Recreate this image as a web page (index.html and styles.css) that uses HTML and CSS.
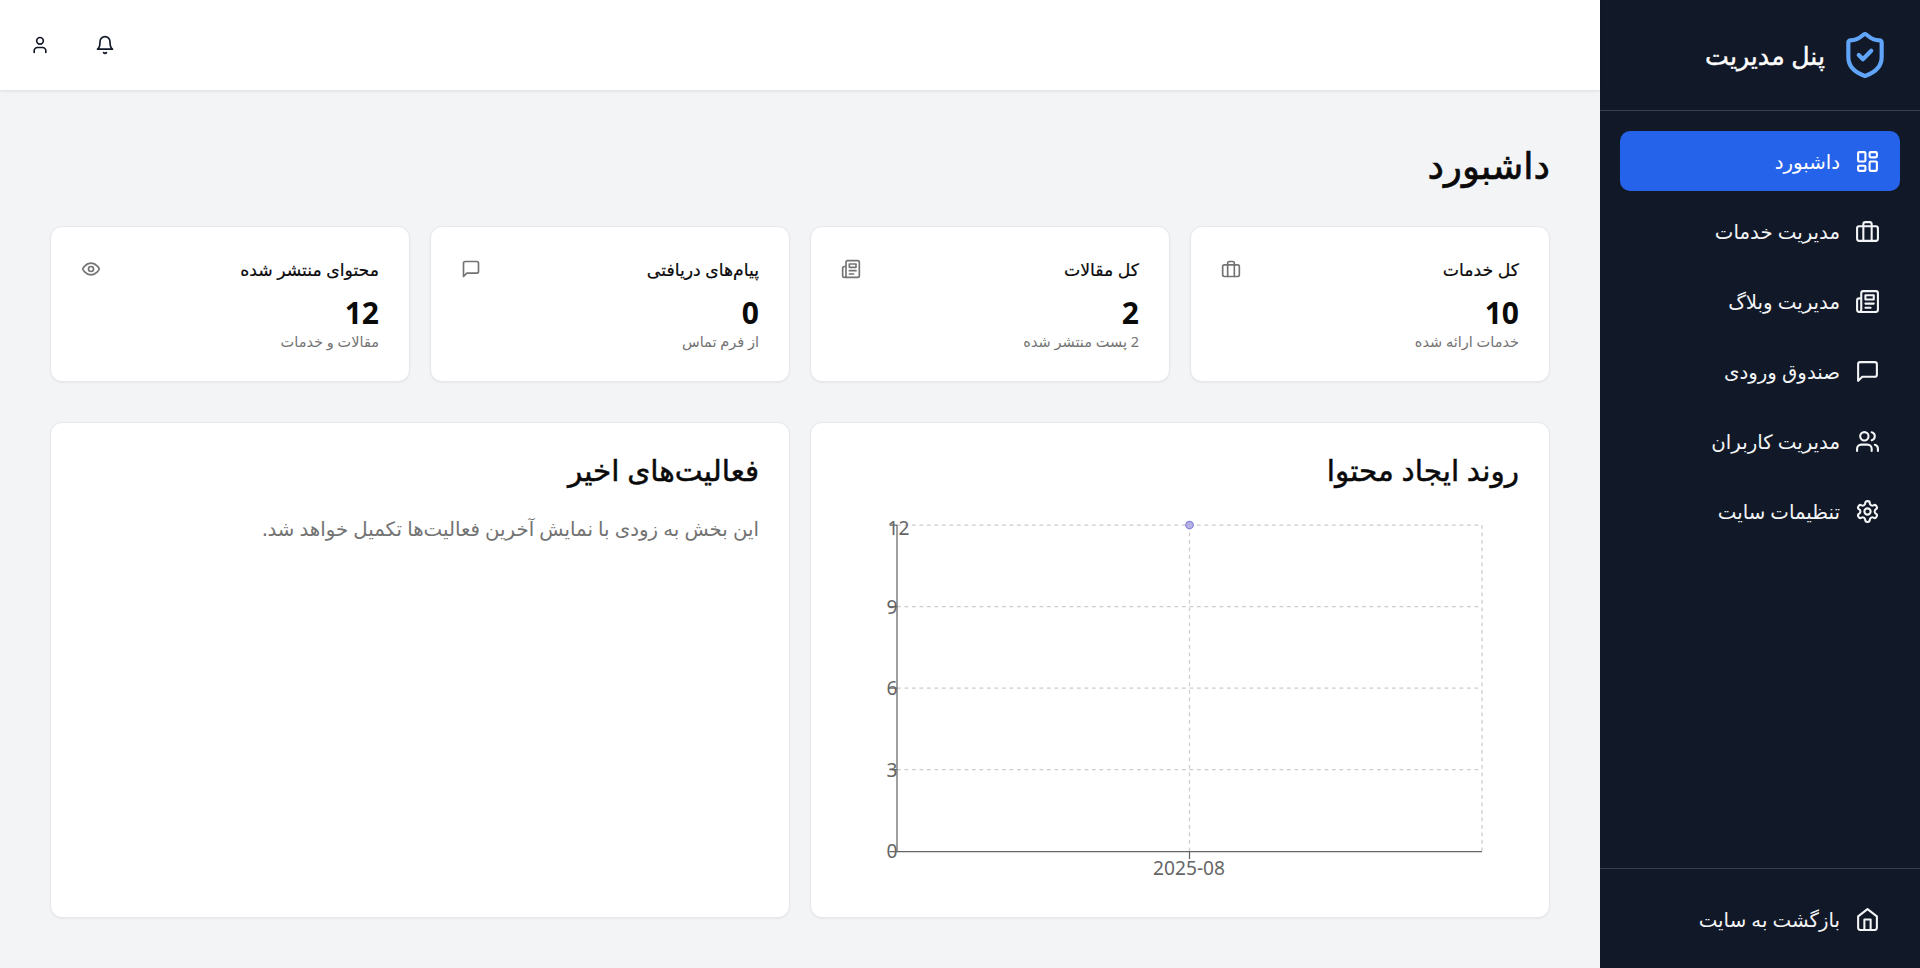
FILE: index.html
```html
<!DOCTYPE html>
<html lang="fa" dir="rtl">
<head>
<meta charset="utf-8">
<title>داشبورد</title>
<link rel="stylesheet" href="styles.css">
</head>
<body>
<div class="app">
  <aside class="sidebar">
    <div class="brand">
      <svg class="brand-icon" viewBox="0 0 24 24"><path d="M20 13c0 5-3.5 7.5-7.66 8.95a1 1 0 0 1-.67-.01C7.5 20.5 4 18 4 13V6a1 1 0 0 1 1-1c2 0 4.5-1.2 6.24-2.72a1.17 1.17 0 0 1 1.52 0C14.51 3.81 17 5 19 5a1 1 0 0 1 1 1z"/><path d="m9 12 2 2 4-4"/></svg>
      <span class="brand-name">پنل مدیریت</span>
    </div>
    <nav class="nav">
      <a class="nav-item active"><svg class="nav-icon" viewBox="0 0 24 24"><rect x="3" y="3" width="7" height="9" rx="1"/><rect x="14" y="3" width="7" height="5" rx="1"/><rect x="14" y="12" width="7" height="9" rx="1"/><rect x="3" y="16" width="7" height="5" rx="1"/></svg><span>داشبورد</span></a>
      <a class="nav-item"><svg class="nav-icon" viewBox="0 0 24 24"><rect x="2" y="7" width="20" height="14" rx="2"/><path d="M16 21V5a2 2 0 0 0-2-2h-4a2 2 0 0 0-2 2v16"/></svg><span>مدیریت خدمات</span></a>
      <a class="nav-item"><svg class="nav-icon" viewBox="0 0 24 24"><path d="M4 22h16a2 2 0 0 0 2-2V4a2 2 0 0 0-2-2H8a2 2 0 0 0-2 2v16a2 2 0 0 1-2 2Zm0 0a2 2 0 0 1-2-2v-9c0-1.1.9-2 2-2h2"/><path d="M18 14h-8M15 18h-5M10 6h8v4h-8V6Z"/></svg><span>مدیریت وبلاگ</span></a>
      <a class="nav-item"><svg class="nav-icon" viewBox="0 0 24 24"><path d="M21 15a2 2 0 0 1-2 2H7l-4 4V5a2 2 0 0 1 2-2h14a2 2 0 0 1 2 2z"/></svg><span>صندوق ورودی</span></a>
      <a class="nav-item"><svg class="nav-icon" viewBox="0 0 24 24"><path d="M16 21v-2a4 4 0 0 0-4-4H6a4 4 0 0 0-4 4v2"/><circle cx="9" cy="7" r="4"/><path d="M22 21v-2a4 4 0 0 0-3-3.87M16 3.13a4 4 0 0 1 0 7.75"/></svg><span>مدیریت کاربران</span></a>
      <a class="nav-item"><svg class="nav-icon" viewBox="0 0 24 24"><path d="M12.22 2h-.44a2 2 0 0 0-2 2v.18a2 2 0 0 1-1 1.73l-.43.25a2 2 0 0 1-2 0l-.15-.08a2 2 0 0 0-2.73.73l-.22.38a2 2 0 0 0 .73 2.73l.15.1a2 2 0 0 1 1 1.72v.51a2 2 0 0 1-1 1.74l-.15.09a2 2 0 0 0-.73 2.73l.22.38a2 2 0 0 0 2.73.73l.15-.08a2 2 0 0 1 2 0l.43.25a2 2 0 0 1 1 1.73V20a2 2 0 0 0 2 2h.44a2 2 0 0 0 2-2v-.18a2 2 0 0 1 1-1.73l.43-.25a2 2 0 0 1 2 0l.15.08a2 2 0 0 0 2.73-.73l.22-.39a2 2 0 0 0-.73-2.73l-.15-.08a2 2 0 0 1-1-1.74v-.5a2 2 0 0 1 1-1.74l.15-.09a2 2 0 0 0 .73-2.73l-.22-.38a2 2 0 0 0-2.73-.73l-.15.08a2 2 0 0 1-2 0l-.43-.25a2 2 0 0 1-1-1.73V4a2 2 0 0 0-2-2z"/><circle cx="12" cy="12" r="3"/></svg><span>تنظیمات سایت</span></a>
    </nav>
    <div class="sidebar-foot">
      <a class="nav-item"><svg class="nav-icon" viewBox="0 0 24 24"><path d="m3 9 9-7 9 7v11a2 2 0 0 1-2 2H5a2 2 0 0 1-2-2z"/><path d="M9 22V12h6v10"/></svg><span>بازگشت به سایت</span></a>
    </div>
  </aside>
  <div class="page">
    <header class="topbar">
      <svg class="top-icon" viewBox="0 0 24 24"><path d="M6 8a6 6 0 0 1 12 0c0 7 3 9 3 9H3s3-2 3-9"/><path d="M10.3 21a1.94 1.94 0 0 0 3.4 0"/></svg>
      <svg class="top-icon" viewBox="0 0 24 24"><path d="M19 21v-2a4 4 0 0 0-4-4H9a4 4 0 0 0-4 4v2"/><circle cx="12" cy="7" r="4"/></svg>
    </header>
    <main class="main">
      <h1 class="page-title">داشبورد</h1>
      <section class="stats">
        <article class="card stat">
          <div class="stat-head"><h3 class="stat-title">کل خدمات</h3><svg class="stat-icon" viewBox="0 0 24 24"><rect x="2" y="7" width="20" height="14" rx="2"/><path d="M16 21V5a2 2 0 0 0-2-2h-4a2 2 0 0 0-2 2v16"/></svg></div>
          <div class="stat-value">10</div>
          <p class="stat-sub">خدمات ارائه شده</p>
        </article>
        <article class="card stat">
          <div class="stat-head"><h3 class="stat-title">کل مقالات</h3><svg class="stat-icon" viewBox="0 0 24 24"><path d="M4 22h16a2 2 0 0 0 2-2V4a2 2 0 0 0-2-2H8a2 2 0 0 0-2 2v16a2 2 0 0 1-2 2Zm0 0a2 2 0 0 1-2-2v-9c0-1.1.9-2 2-2h2"/><path d="M18 14h-8M15 18h-5M10 6h8v4h-8V6Z"/></svg></div>
          <div class="stat-value">2</div>
          <p class="stat-sub">2 پست منتشر شده</p>
        </article>
        <article class="card stat">
          <div class="stat-head"><h3 class="stat-title">پیام‌های دریافتی</h3><svg class="stat-icon" viewBox="0 0 24 24"><path d="M21 15a2 2 0 0 1-2 2H7l-4 4V5a2 2 0 0 1 2-2h14a2 2 0 0 1 2 2z"/></svg></div>
          <div class="stat-value">0</div>
          <p class="stat-sub">از فرم تماس</p>
        </article>
        <article class="card stat">
          <div class="stat-head"><h3 class="stat-title">محتوای منتشر شده</h3><svg class="stat-icon" viewBox="0 0 24 24"><path d="M2 12s3-7 10-7 10 7 10 7-3 7-10 7-10-7-10-7Z"/><circle cx="12" cy="12" r="3"/></svg></div>
          <div class="stat-value">12</div>
          <p class="stat-sub">مقالات و خدمات</p>
        </article>
      </section>
      <section class="panels">
        <article class="card panel chart-panel">
          <h2 class="panel-title">روند ایجاد محتوا</h2>
          <svg class="chart" viewBox="0 0 678 380">
            <g class="grid">
              <path d="M56 17H641M56 98.5H641M56 180H641M56 261.5H641M348.5 17V343M641 17V343"/>
            </g>
            <path class="axis" d="M56 17V343M48.5 17H56M48.5 98.5H56M48.5 180H56M48.5 261.5H56M48.5 343.5H56"/>
            <path class="axis" d="M56 343.5H641M348.5 343.5V351"/>
            <text class="tick" x="46.5" y="27">12</text>
            <text class="tick" x="45.5" y="106">9</text>
            <text class="tick" x="45.5" y="187">6</text>
            <text class="tick" x="45.5" y="269">3</text>
            <text class="tick" x="45.5" y="350">0</text>
            <text class="tick" x="312" y="367">2025-08</text>
            <circle class="dot" cx="348.5" cy="17" r="3.75"/>
          </svg>
        </article>
        <article class="card panel">
          <h2 class="panel-title">فعالیت‌های اخیر</h2>
          <p class="panel-text">این بخش به زودی با نمایش آخرین فعالیت‌ها تکمیل خواهد شد.</p>
        </article>
      </section>
    </main>
  </div>
</div>
</body>
</html>
```
FILE: styles.css
```css
* { box-sizing: border-box; }
html, body { margin: 0; height: 100%; }
body {
  font-family: "Noto Sans", "Open Sans", "DejaVu Sans", sans-serif;
  color: #0a0a0a;
  background: #f3f4f6;
}
svg { fill: none; stroke: currentColor; stroke-width: 2; stroke-linecap: round; stroke-linejoin: round; display: block; flex: none; }
.app { display: flex; height: 968px; overflow: hidden; }
.sidebar { width: 320px; flex: none; background: #111827; color: #fff; display: flex; flex-direction: column; }
.brand { height: 111px; border-bottom: 1px solid #374151; display: flex; align-items: center; gap: 15px; padding: 0 30px; }
.brand-icon { width: 50px; height: 50px; color: #60a5fa; }
.brand-name { font-size: 25.25px; font-weight: 400; -webkit-text-stroke: .4px currentColor; }
.nav { flex: 1; padding: 20px; display: flex; flex-direction: column; gap: 10px; }
.nav-item { height: 60px; border-radius: 10px; padding: 0 20px; display: flex; align-items: center; gap: 15px; color: #f3f4f6; font-size: 19.75px; }
.nav-item.active { background: #2563eb; color: #fff; }
.nav-icon { width: 25px; height: 25px; }
.sidebar-foot { border-top: 1px solid #374151; padding: 20px 20px 19px; }
.page { flex: 1; min-width: 0; display: flex; flex-direction: column; }
.topbar { height: 90px; flex: none; background: #fff; box-shadow: 0 1px 3px rgba(0,0,0,.1); display: flex; justify-content: flex-end; align-items: center; gap: 45px; padding: 0 30px; }
.top-icon { width: 20px; height: 20px; color: #111827; }
.main { flex: 1; padding: 50px; display: flex; flex-direction: column; }
.page-title { margin: 0 0 36px; font-size: 37px; line-height: 50px; font-weight: 400; -webkit-text-stroke: .7px currentColor; }
.stats { display: grid; grid-template-columns: repeat(4, 1fr); gap: 20px; margin-bottom: 40px; }
.card { background: #fff; border: 1px solid #e5e7eb; border-radius: 12px; box-shadow: 0 1px 2px rgba(0,0,0,.05); }
.stat { height: 156px; padding: 30px; }
.stat-head { display: flex; justify-content: space-between; align-items: center; height: 24px; margin-bottom: 14px; }
.stat-title { margin: 0; font-size: 17.25px; font-weight: 400; -webkit-text-stroke: .2px currentColor; }
.stat-icon { width: 20px; height: 20px; color: #737373; }
.stat-value { font-size: 30px; line-height: 36px; font-weight: 700; }
.stat-sub { margin: 0; font-size: 14.5px; line-height: 20px; color: #737373; }
.panels { flex: 1; display: grid; grid-template-columns: 1fr 1fr; gap: 20px; min-height: 0; }
.panel { padding: 30px; display: flex; flex-direction: column; }
.chart-panel { padding-bottom: 29px; }
.panel-title { margin: 0; font-size: 29.5px; line-height: 34px; font-weight: 400; -webkit-text-stroke: .5px currentColor; }
.panel-text { margin: 26px 0 0; font-size: 19.75px; line-height: 32px; color: #737373; }
.chart { width: 678px; height: 380px; margin-top: auto; }
.grid path { stroke: #ccc; stroke-width: 1.25; stroke-dasharray: 3.75 3.75; stroke-linecap: butt; }
.axis { stroke: #666; stroke-width: 1.25; stroke-linecap: butt; }
.tick { fill: #666; stroke: none; font-size: 19.2px; direction: ltr; }
.dot { fill: #b4b1e6; stroke: #8884d8; stroke-width: 1.25; }
```
